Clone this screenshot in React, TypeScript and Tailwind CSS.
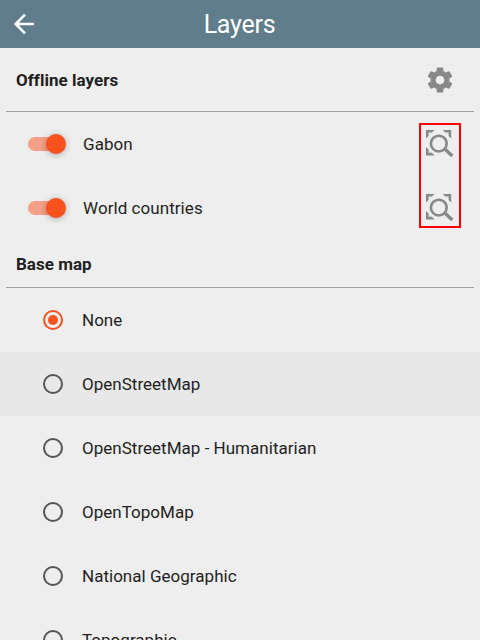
const baseMaps = [
  'None',
  'OpenStreetMap',
  'OpenStreetMap - Humanitarian',
  'OpenTopoMap',
  'National Geographic',
  'Topographic',
];

function BackIcon() {
  return (
    <svg width="24" height="24" viewBox="0 0 24 24" fill="none" stroke="#fff" strokeWidth="2.6">
      <path d="M22 12H3.5M13 2.7 3.7 12l9.3 9.3" />
    </svg>
  );
}

function GearIcon() {
  return (
    <svg width="30" height="30" viewBox="0 0 24 24" fill="#888" className="mt-px">
      <path d="M19.43 12.98c.04-.32.07-.64.07-.98s-.03-.66-.07-.98l2.11-1.65c.19-.15.24-.42.12-.64l-2-3.46c-.12-.22-.39-.3-.61-.22l-2.49 1c-.52-.4-1.08-.73-1.69-.98l-.38-2.65C14.46 2.18 14.25 2 14 2h-4c-.25 0-.46.18-.49.42l-.38 2.65c-.61.25-1.17.59-1.69.98l-2.49-1c-.23-.09-.49 0-.61.22l-2 3.46c-.13.22-.07.49.12.64l2.11 1.65c-.04.32-.07.65-.07.98s.03.66.07.98l-2.11 1.65c-.19.15-.24.42-.12.64l2 3.46c.12.22.39.3.61.22l2.49-1c.52.4 1.08.73 1.69.98l.38 2.65c.03.24.24.42.49.42h4c.25 0 .46-.18.49-.42l.38-2.65c.61-.25 1.17-.59 1.69-.98l2.49 1c.23.09.49 0 .61-.22l2-3.46c.12-.22.07-.49-.12-.64l-2.11-1.65zM12 15.5c-1.93 0-3.5-1.57-3.5-3.5s1.57-3.5 3.5-3.5 3.5 1.57 3.5 3.5-1.57 3.5-3.5 3.5z" />
    </svg>
  );
}

function ZoomToIcon() {
  return (
    <svg width="28" height="28" viewBox="0 0 28 28" fill="#888">
      <path d="M0 0h8.5L6 2.6H2.6V6L0 8.5zM25.2 0h-8.5l2.5 2.6h3.4V6l2.6 2.5zM0 25.4h8.5L6 22.8H2.6v-3.4L0 16.9z" />
      <circle cx="12.8" cy="13.6" r="7.9" fill="none" stroke="#888" strokeWidth="2.6" />
      <path d="m18.3 18.6 8 7.3" stroke="#888" strokeWidth="3.4" />
    </svg>
  );
}

function Switch() {
  return (
    <div className="flex h-[14px] w-[37px] items-center justify-end rounded-full bg-[#f3a087]">
      <div className="-mr-px h-5 w-5 shrink-0 rounded-full bg-[#f7521e] shadow-[0_1px_6px_rgba(0,0,0,0.3)]" />
    </div>
  );
}

function SectionTitle({ children }: { children: string }) {
  return <h2 className="text-[17px] leading-6 font-bold tracking-[0.02px]">{children}</h2>;
}

function LayerRow({ name }: { name: string }) {
  return (
    <div className="flex h-16 items-center pl-7">
      <Switch />
      <span className="ml-[18px] flex-1 tracking-[0.06px]">{name}</span>
    </div>
  );
}

function Radio({ checked }: { checked: boolean }) {
  return (
    <span
      className={`flex h-5 w-5 items-center justify-center rounded-full border-2 ${
        checked ? 'border-[#f7521e]' : 'border-[#555]'
      }`}
    >
      {checked && <span className="h-[10px] w-[10px] rounded-full bg-[#f7521e]" />}
    </span>
  );
}

export default function App() {
  return (
    <div className="h-[640px] w-[480px] overflow-hidden bg-[#eee] font-[Roboto,sans-serif] text-[17px] leading-6 tracking-[0.02px] text-[#1f1f21]">
      <header className="grid h-12 grid-cols-[48px_1fr_48px] items-center bg-[#607d8b]">
        <div className="pl-3">
          <BackIcon />
        </div>
        <h1 className="pt-px pr-px text-center text-[25px] leading-[47px] tracking-[-0.25px] text-white">Layers</h1>
      </header>

      <div className="mx-[6px] flex h-16 items-center justify-between border-b border-[#a0a0a0] pr-[19px] pl-[10px]">
        <SectionTitle>Offline layers</SectionTitle>
        <GearIcon />
      </div>
      <div className="flex">
        <div className="flex-1">
          <LayerRow name="Gabon" />
          <LayerRow name="World countries" />
        </div>
        <div className="mt-[11px] mr-[19px] flex h-[105px] w-[42px] flex-col gap-9 border-2 border-[#f00] pt-[5px] pl-[5px]">
          <ZoomToIcon />
          <ZoomToIcon />
        </div>
      </div>

      <div className="mx-[6px] flex h-12 items-center border-b border-[#a0a0a0] pl-[10px]">
        <SectionTitle>Base map</SectionTitle>
      </div>
      {baseMaps.map((name, i) => (
        <div key={name} className={`flex h-16 items-center pl-[43px] ${i === 1 ? 'bg-[#e8e8e8]' : ''}`}>
          <Radio checked={i === 0} />
          <span className="ml-[19px]">{name}</span>
        </div>
      ))}
    </div>
  );
}
